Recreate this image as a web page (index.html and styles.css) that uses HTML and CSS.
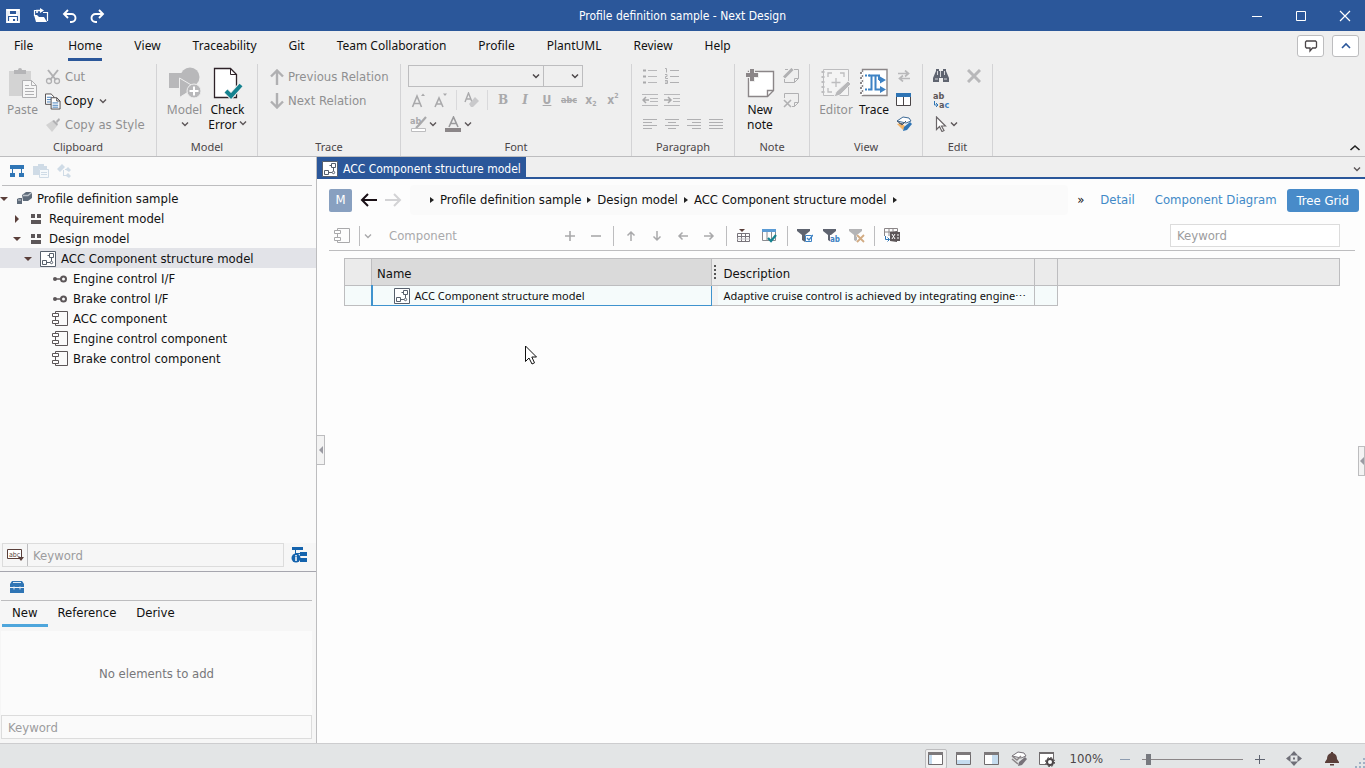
FILE: index.html
```
<!DOCTYPE html>
<html lang="en">
<head>
<meta charset="utf-8">
<title>Profile definition sample - Next Design</title>
<link rel="stylesheet" href="styles.css">
</head>
<body>
<svg class="sprite" aria-hidden="true">
  <symbol id="chev" viewBox="0 0 8 8"><path d="M1 2.500l3 3 3-3" fill="none" stroke="currentColor" stroke-width="1.400"/></symbol>
  <symbol id="down" viewBox="0 0 8 8"><path d="M0 2h8L4 6z" fill="#5a3f3a"/></symbol>
  <symbol id="right" viewBox="0 0 8 8"><path d="M2 0v8l4-4z" fill="#5a3f3a"/></symbol>
  <symbol id="struct" viewBox="0 0 16 16"><path d="M.5.5h15v15H.5z" fill="#fff" stroke="#57606c"/><path d="M9.500 2.500h4v4h-4zM2.500 9.500h4v4h-4zM7 11.500h3M11.500 7v3M9 4.500H7.500" fill="none" stroke="#57606c"/><circle cx="11.500" cy="11.500" r="1.200" fill="#fff" stroke="#57606c"/></symbol>
  <symbol id="comp" viewBox="0 0 16 16"><path d="M3.500 3V.5h12v14h-12V12M3.500 6v3" fill="none" stroke="currentColor"/><path d="M.5 2.500h6v3h-6zM.5 9.500h6v3h-6z" fill="#fff" stroke="currentColor"/></symbol>
  <symbol id="iface" viewBox="0 0 16 10"><circle cx="3" cy="5" r="2" fill="#5c5658"/><path d="M4 5h5" stroke="#5c5658" stroke-width="1.500"/><circle cx="11.500" cy="5" r="2.500" fill="none" stroke="#5c5658" stroke-width="2"/></symbol>
  <symbol id="pkg" viewBox="0 0 12 12"><path d="M1 1h4v4H1zM7 1h4v4H7zM1 7h10v4H1z" fill="#5c5658"/></symbol>
  <symbol id="arr" viewBox="0 0 12 12"><path d="M6 11V2M2.500 5.500L6 2l3.500 3.500" fill="none" stroke="currentColor" stroke-width="1.500"/></symbol>
</svg>
<div class="app">
  <header class="titlebar">
    <div class="quick">
      <button aria-label="Save"><svg width="14" height="14" viewBox="0 0 14 14"><path d="M1 1h12v12H1zM3 1v5h8V1M4 13V9h6v4" fill="none" stroke="#fff" stroke-width="1.800"/><path d="M4 9h3v4H4z" fill="#fff"/></svg></button>
      <button aria-label="Open"><svg width="16" height="15" viewBox="0 0 16 15"><path d="M14.500 13V4.500H10M1.500 8V2.500H4" fill="none" stroke="#fff" stroke-width="1.200"/><path d="M1 7h3l2 2h5l3 5H3zM7 0l4 2.500L7 5z" fill="#fff"/><path d="M4 5V2.500h4" fill="none" stroke="#fff" stroke-width="1.600"/></svg></button>
      <button aria-label="Undo"><svg width="15" height="14" viewBox="0 0 15 14"><path d="M6 1L2 5l4 4M2 5h7.500a4 4 0 0 1 0 8H8" fill="none" stroke="#fff" stroke-width="1.900"/></svg></button>
      <button aria-label="Redo"><svg width="15" height="14" viewBox="0 0 15 14"><path d="M9 1l4 4-4 4M13 5H5.500a4 4 0 0 0 0 8H7" fill="none" stroke="#fff" stroke-width="1.900"/></svg></button>
    </div>
    <h1>Profile definition sample - Next Design</h1>
    <div class="win">
      <button aria-label="Minimize"><svg width="12" height="12"><path d="M1 6.500h10" stroke="#fff"/></svg></button>
      <button aria-label="Maximize"><svg width="12" height="12"><path d="M1.500 1.500h9v9h-9z" fill="none" stroke="#fff"/></svg></button>
      <button aria-label="Close"><svg width="12" height="12"><path d="M1 1l10 10M11 1L1 11" stroke="#fff" stroke-width="1.200"/></svg></button>
    </div>
  </header>

  <nav class="menu">
    <button>File</button><button class="on">Home</button><button>View</button><button>Traceability</button><button>Git</button><button>Team Collaboration</button><button>Profile</button><button>PlantUML</button><button>Review</button><button>Help</button>
    <div class="menu-right">
      <button class="boxed" aria-label="Feedback"><svg width="14" height="13" viewBox="0 0 14 13"><path d="M2.500 1h9l1 1v5l-1 1H8.500L6 11V8H2.500l-1-1V2z" fill="none" stroke="#4b4648" stroke-width="1.300"/></svg></button>
      <button class="boxed" aria-label="Collapse"><svg width="12" height="8" viewBox="0 0 12 8"><path d="M2 6l4-4 4 4" fill="none" stroke="#2b579a" stroke-width="1.600"/></svg></button>
    </div>
  </nav>

  <section class="ribbon">
    <div class="group clipboard">
      <div class="tools">
        <button class="big dim"><svg width="30" height="32" viewBox="0 0 30 32"><path d="M1 4h22v25H1z" fill="#d3d3d3"/><path d="M6 3h4a2 2 0 0 1 4 0h4v4H6z" fill="#b5b5b7"/><path d="M14.500 13.500h9l5 5v12h-14z" fill="#f6f6f6" stroke="#b0b0b2"/><path d="M23.500 13.500v5h5M17 18.500h4M17 21.500h9M17 24.500h9M17 27.500h9" fill="none" stroke="#b0b0b2"/></svg><span>Paste</span></button>
        <div class="stack">
          <button class="row dim"><svg width="16" height="16" viewBox="0 0 16 16"><path d="M3 1l8 10M13 1L5 11" stroke="#b0b0b2" stroke-width="2"/><circle cx="4" cy="12" r="2.500" fill="none" stroke="#b0b0b2" stroke-width="1.300"/><circle cx="12" cy="12" r="2.500" fill="none" stroke="#b0b0b2" stroke-width="1.300"/></svg>Cut</button>
          <button class="row copy"><svg width="16" height="17" viewBox="0 0 17 17"><path d="M.5.5h6l3 3v8h-9z" fill="#fff" stroke="#4b4648"/><path d="M2 4h5M2 6.500h5M2 9h4" stroke="#3d7ab8"/><path d="M6.500 4.500h6l3.500 3.500v8.500H6.500z" fill="#fff" stroke="#4b4648"/><path d="M12.500 4.500v3.500H16" fill="none" stroke="#4b4648"/><path d="M8 10h6M8 12.500h6M8 14.500h6" stroke="#3d7ab8"/></svg>Copy<svg class="c8"><use href="#chev"/></svg></button>
          <button class="row dim"><svg width="16" height="16" viewBox="0 0 16 16"><path d="M1 8l6-4 5 5-5 6z" fill="#d3d3d3"/><path d="M7 4l2-1 4 4-1 2zM11 4l3-3 1 2-3 3z" fill="#b0b0b2"/></svg>Copy as Style</button>
        </div>
      </div>
      <div class="cap">Clipboard</div>
    </div>
    <div class="group model">
      <div class="tools">
        <button class="big dim"><svg width="32" height="32" viewBox="0 0 32 32"><circle cx="21" cy="10" r="9.500" fill="#b8b8ba"/><path d="M0 6h16v15H0z" fill="#b8b8ba"/><path d="M10.500 11l16 9.500-16 10z" fill="#b8b8ba" stroke="#efefef"/><circle cx="25" cy="24" r="7" fill="#b8b8ba" stroke="#efefef"/><path d="M20.500 24h9M25 19.500v9" stroke="#fff" stroke-width="2"/></svg><span>Model</span><svg class="c8"><use href="#chev"/></svg></button>
        <button class="big"><svg width="30" height="32" viewBox="0 0 30 32"><path d="M1.500 1.500h16l6 6v23h-22z" fill="#fff" stroke="#2e2228" stroke-width="1.300"/><path d="M17.500 1.500v6h6" fill="none" stroke="#2e2228"/><path d="M13 24l5 5 10-11" fill="none" stroke="#efefef" stroke-width="6"/><path d="M13 24l5 5 10-11" fill="none" stroke="#15828f" stroke-width="4"/></svg><span>Check</span><span>Error<svg class="c8"><use href="#chev"/></svg></span></button>
      </div>
      <div class="cap">Model</div>
    </div>
    <div class="group trace">
      <div class="tools stack">
        <button class="row dim"><svg width="14" height="16" viewBox="0 0 14 16"><path d="M7 16V2M1 7.500L7 1.500l6 6" fill="none" stroke="#b0b0b2" stroke-width="2.400"/></svg>Previous Relation</button>
        <button class="row dim"><svg width="14" height="16" viewBox="0 0 14 16"><path d="M7 0v14M1 8.500l6 6 6-6" fill="none" stroke="#b0b0b2" stroke-width="2.400"/></svg>Next Relation</button>
      </div>
      <div class="cap">Trace</div>
    </div>
    <div class="group font">
      <div class="tools stack">
        <div class="line"><select class="family" aria-label="Font family"><option></option></select><select class="size" aria-label="Font size"><option></option></select></div>
        <div class="line">
          <button class="ic" aria-label="Grow font"><svg width="16" height="16" viewBox="0 0 16 16"><path d="M1.500 15L6 4l4.500 11M3 11.500h6" fill="none" stroke="#a9a9ab" stroke-width="1.600"/><path d="M10 4l2-2.500L14 4z" fill="#a9a9ab"/></svg></button>
          <button class="ic" aria-label="Shrink font"><svg width="16" height="16" viewBox="0 0 16 16"><path d="M2 15l4-9 4 9M3.500 12h5" fill="none" stroke="#a9a9ab" stroke-width="1.600"/><path d="M10 1.500h4L12 4z" fill="#a9a9ab"/></svg></button>
          <i class="vs"></i>
          <button class="ic" aria-label="Clear format"><svg width="16" height="16" viewBox="0 0 16 16"><path d="M1 10L4.500 1 8 10M2 7h5" fill="none" stroke="#a9a9ab" stroke-width="1.400"/><path d="M5 12l6-7 4 4-6 6H7z" fill="#c9c9cb"/></svg></button>
          <i class="vs"></i>
          <button class="ic g b">B</button><button class="ic g i">I</button><button class="ic g u">U</button><button class="ic g s">abc</button><button class="ic g x">x<sub>2</sub></button><button class="ic g x">x<sup>2</sup></button>
        </div>
        <div class="line">
          <button class="ic wide" aria-label="Highlight"><svg width="17" height="16" viewBox="0 0 17 16"><text x="0" y="8" class="t9" fill="#a9a9ab">ab</text><path d="M16 1L9 9l-3 3" stroke="#a9a9ab" stroke-width="2.200"/><path d="M1.500 12.500h14v3h-14z" fill="#fff" stroke="#bdbdbf"/></svg><svg class="c8"><use href="#chev"/></svg></button>
          <button class="ic wide" aria-label="Font colour"><svg width="17" height="16" viewBox="0 0 17 16"><path d="M4 11L8.500 1 13 11M5.500 7.500h6" fill="none" stroke="#9a9a9c" stroke-width="1.600"/><path d="M0 12h16v4H0z" fill="#8b8688"/></svg><svg class="c8"><use href="#chev"/></svg></button>
        </div>
      </div>
      <div class="cap">Font</div>
    </div>
    <div class="group para">
      <div class="tools grid4">
        <button class="ic" aria-label="Bullets"><svg width="16" height="16"><path d="M6 2.500h9M6 8.500h9M6 14.500h9" stroke="#b8b8ba"/><path d="M1 2.500h3M1 8.500h3M1 14.500h3" stroke="#a9a9ab" stroke-width="2"/></svg></button>
        <button class="ic" aria-label="Numbering"><svg width="16" height="16"><path d="M6 2.500h9M6 8.500h9M6 14.500h9M1 .5h1.500v4M1 6.500h2v2H1.500v2H4M1 12.500h2.500v3H1M1 14h2" fill="none" stroke="#b0b0b2"/></svg></button><i></i><i></i>
        <button class="ic" aria-label="Outdent"><svg width="16" height="14"><path d="M0 1.500h16M8 5.500h8M8 8.500h8M0 12.500h16" stroke="#b8b8ba"/><path d="M1 7h6M4 4L1 7l3 3" fill="none" stroke="#a9a9ab" stroke-width="1.500"/></svg></button>
        <button class="ic" aria-label="Indent"><svg width="16" height="14"><path d="M0 1.500h16M9 5.500h7M9 8.500h7M0 12.500h16" stroke="#b8b8ba"/><path d="M0 7h6M4 4l3 3-3 3" fill="none" stroke="#a9a9ab" stroke-width="1.500"/></svg></button><i></i><i></i>
        <button class="ic" aria-label="Left"><svg width="16" height="12"><path d="M1 1.500h14M1 4.500h9M1 7.500h14M1 10.500h9" stroke="#b0b0b2"/></svg></button>
        <button class="ic" aria-label="Centre"><svg width="16" height="12"><path d="M1 1.500h14M4 4.500h8M1 7.500h14M4 10.500h8" stroke="#b0b0b2"/></svg></button>
        <button class="ic" aria-label="Right"><svg width="16" height="12"><path d="M1 1.500h14M6 4.500h9M1 7.500h14M6 10.500h9" stroke="#b0b0b2"/></svg></button>
        <button class="ic" aria-label="Justify"><svg width="16" height="12"><path d="M1 1.500h14M1 4.500h14M1 7.500h14M1 10.500h14" stroke="#b0b0b2"/></svg></button>
      </div>
      <div class="cap">Paragraph</div>
    </div>
    <div class="group note">
      <div class="tools">
        <button class="big"><svg width="30" height="32" viewBox="0 0 30 32"><path d="M3.500 4.500h25v19l-6 6h-19z" fill="#fff" stroke="#8b8688" stroke-width="1.400"/><path d="M22.500 29.500v-6h6" fill="none" stroke="#8b8688" stroke-width="1.400"/><path d="M1 8h13M7 2v13" stroke="#efefef" stroke-width="6"/><path d="M1 8h12M7 2v12" stroke="#8b8688" stroke-width="4"/></svg><span>New</span><span>note</span></button>
        <div class="stack">
          <button class="ic" aria-label="Edit note"><svg width="16" height="16"><path d="M2 1.500h3M11 1.500h4.500v9l-4 4H1.500V11M11.500 14.500v-4h4" fill="none" stroke="#b0b0b2"/><path d="M1 9.500L9.500 1" stroke="#b0b0b2" stroke-width="3"/></svg></button>
          <button class="ic" aria-label="Delete note"><svg width="16" height="16"><path d="M1.500 6V1.500h14v9l-4 4H9M11.500 14.500v-4h4" fill="none" stroke="#b0b0b2"/><path d="M1 8l7 7M8 8l-7 7" stroke="#b0b0b2" stroke-width="1.600"/></svg></button>
        </div>
      </div>
      <div class="cap">Note</div>
    </div>
    <div class="group view">
      <div class="tools">
        <button class="big dim"><svg width="30" height="32" viewBox="0 0 30 32"><path d="M2.500 2.500h25v26h-25z" fill="#f4f4f4" stroke="#bdbdbf"/><path d="M7 10V6h4M19 6h4v4M7 21v4h4M15 11v9M10.500 15.500h9" fill="none" stroke="#bdbdbf" stroke-width="1.300"/><path d="M2 4v24" stroke="#bdbdbf" stroke-width="3" stroke-dasharray="2 3"/><path d="M13 30l2-5L27 14l3 3-11 11z" fill="#b8b8ba" stroke="#efefef"/></svg><span>Editor</span></button>
        <button class="big"><svg width="28" height="32" viewBox="0 0 28 32"><path d="M2.500 2.500h24.500v26h-24.500z" fill="#fff" stroke="#8b8688" stroke-width="1.400"/><path d="M2 5v23" stroke="#fff" stroke-width="3" stroke-dasharray="3 2"/><path d="M1 5v23" stroke="#8b8688" stroke-width="2" stroke-dasharray="2 3"/><path d="M5 8.500h5M5 22.500h5" stroke="#3d82c4" stroke-width="2" stroke-dasharray="2 1"/><path d="M10 22.500h1.500v-14H19V13M9 8.500h3M15.500 9v13.500H21M19 13h2" fill="none" stroke="#3d82c4" stroke-width="2"/><path d="M20 9.500l6 3.500-6 3.500zM20 19l6 3.500-6 3.500z" fill="#3d82c4"/></svg><span>Trace</span></button>
        <div class="stack">
          <button class="ic" aria-label="Swap"><svg width="14" height="12" viewBox="0 0 14 12"><path d="M1 3.500h10M8 .5l3.500 3L8 6.500M13 8.500H3M6 5.500l-3.500 3 3.500 3" fill="none" stroke="#b8b8ba" stroke-width="1.700"/></svg></button>
          <button class="ic" aria-label="Split view"><svg width="16" height="14"><path d="M.5.5h14v12H.5zM7.500 3v10" fill="#fff" stroke="#4b4648"/><path d="M0 0h15v4H0z" fill="#2f75b5"/></svg></button>
          <button class="ic" aria-label="Style"><svg width="17" height="16" viewBox="0 0 17 16"><path d="M1 5l6-4 6 1 2 3-5 2z" fill="#fff" stroke="#3d6a96"/><path d="M1 8l6 6 2-4-4-3z" fill="#f2b366"/><path d="M1 5l5 4 4-4M3 7l4 1" fill="none" stroke="#4b5a6c"/><path d="M7 15l1-4 6-5 2 2-5 6z" fill="#2f75b5"/></svg></button>
        </div>
      </div>
      <div class="cap">View</div>
    </div>
    <div class="group edit">
      <div class="tools edit-grid">
        <button class="ic" aria-label="Find"><svg width="16" height="14"><path d="M3 0h3v2h4V0h3v2l3 7v4h-6V9H6v4H0V9l3-7z" fill="#5f6470"/><path d="M7.500 2v6M2 10h3M11 10h3M4.500 2v4M11.500 2v4" stroke="#d5d6da"/></svg></button>
        <button class="ic" aria-label="Delete"><svg width="14" height="14"><path d="M1 1l12 12M13 1L1 13" stroke="#b8b8ba" stroke-width="3"/></svg></button>
        <button class="ic" aria-label="Replace"><svg width="17" height="18"><text x="0" y="8" class="t9" fill="#5c5658">ab</text><text x="6" y="17" class="t9" fill="#5c5658">a<tspan fill="#3d82c4">c</tspan></text><path d="M1.500 10v4h3M3 12l2 2-2 2" fill="none" stroke="#2f75b5"/></svg></button><i></i>
        <button class="ic wide" aria-label="Select"><svg width="12" height="16" viewBox="0 0 12 16"><path d="M1.500 1v12.500l3-3 2.500 5 2-1-2.500-4.500h4z" fill="#fff" stroke="#6b6668" stroke-width="1.200"/></svg><svg class="c8"><use href="#chev"/></svg></button>
      </div>
      <div class="cap">Edit</div>
    </div>
    <button class="fold" aria-label="Collapse ribbon"><svg width="12" height="8" viewBox="0 0 12 8"><path d="M1.500 6L6 2l4.500 4" fill="none" stroke="#222" stroke-width="1.600"/></svg></button>
  </section>

  <main class="work">
    <aside class="side">
      <div class="side-tools">
        <button aria-label="Model tree"><svg width="16" height="14"><path d="M1 1h14v4H1zM1 9h5v4H1zM10 9h5v4h-5zM3 5h1v4H3zM12 5h1v4h-1z" fill="#2f75b5"/></svg></button>
        <button aria-label="Pages"><svg width="16" height="14"><path d="M0 2h5V0h6v2h3v3H6v6H0z" fill="#cfdbe6"/><path d="M6.500 5.500h9v8h-9zM8 8.500h6M8 10.500h6" fill="#f6f9fb" stroke="#cfdbe6"/></svg></button>
        <button aria-label="Relations"><svg width="15" height="14"><path d="M0 5l5-5 3 3-5 5zM8 5h1l2-2 3 3-2 2-3-2H8zM7 11h2l2-2 3 3-2 2-3-2H6V6h1z" fill="#cfdbe6"/></svg></button>
      </div>
      <ul class="tree">
        <li class="l0"><svg class="c8"><use href="#down"/></svg><svg width="15" height="13" viewBox="0 0 15 13"><path d="M5 3l4-3h5l1 2v4l-4 3H6z" fill="#5f6b7a"/><path d="M6 3.500h5l3-2.500" fill="none" stroke="#b9c0c8" stroke-width="1.500"/><path d="M0 7l2-1h3v6H0z" fill="#5f6b7a"/><path d="M1 8h3" stroke="#cfd4da"/></svg>Profile definition sample</li>
        <li class="l1"><svg class="c8"><use href="#right"/></svg><svg class="s12"><use href="#pkg"/></svg>Requirement model</li>
        <li class="l1"><svg class="c8"><use href="#down"/></svg><svg class="s12"><use href="#pkg"/></svg>Design model</li>
        <li class="l2 sel"><svg class="c8"><use href="#down"/></svg><svg class="s16"><use href="#struct"/></svg>ACC Component structure model</li>
        <li class="l3"><svg class="s16"><use href="#iface"/></svg>Engine control I/F</li>
        <li class="l3"><svg class="s16"><use href="#iface"/></svg>Brake control I/F</li>
        <li class="l3"><svg class="s16"><use href="#comp"/></svg>ACC component</li>
        <li class="l3"><svg class="s16"><use href="#comp"/></svg>Engine control component</li>
        <li class="l3"><svg class="s16"><use href="#comp"/></svg>Brake control component</li>
      </ul>
      <div class="find">
        <div class="find-box">
          <button aria-label="Match mode"><svg width="17" height="12"><path d="M.5.5h14v9H.5z" fill="#fff" stroke="#5a3f3a"/><text x="2" y="8" class="t7" fill="#5a3f3a">abc</text><path d="M11 8h6l-3 4z" fill="#5a3f3a"/></svg></button>
          <input type="text" placeholder="Keyword" aria-label="Search tree">
        </div>
        <button aria-label="Tree options"><svg width="17" height="16"><path d="M1 0h11v3H1zM9 5h7v4H9zM9 11h7v4H9zM4 3h1v4H4zM5 6h4v1H5z" fill="#1463ad"/><circle cx="5" cy="11" r="4.500" fill="#1463ad"/><path d="M5 8v1.500M5 10v4" stroke="#fff" stroke-width="1.500"/></svg></button>
      </div>
      <div class="palette">
        <div class="palette-head"><svg width="14" height="13"><path d="M0 4l2-3h10l2 3v3H0zM0 8h14v5H0z" fill="#2f75b5"/><path d="M3 2.500h8M4 6.500v3M10 6.500v3" stroke="#dcebf7"/></svg></div>
        <nav class="ptabs"><button class="on">New</button><button>Reference</button><button>Derive</button></nav>
        <div class="empty">No elements to add</div>
        <input type="text" placeholder="Keyword" aria-label="Search palette">
      </div>
      <button class="grip" aria-label="Collapse panel"><svg width="4" height="8"><path d="M4 0v8L0 4z" fill="#9b9ba3"/></svg></button>
    </aside>

    <section class="doc">
      <div class="tabs">
        <button class="tab"><svg class="s16"><use href="#struct"/></svg>ACC Component structure model</button>
        <button class="more" aria-label="All tabs"><svg class="c8"><use href="#chev"/></svg></button>
      </div>
      <div class="crumbs">
        <button class="m">M</button>
        <button aria-label="Back"><svg width="17" height="14"><path d="M17 7H2M8 1L2 7l6 6" fill="none" stroke="#1a1016" stroke-width="2"/></svg></button>
        <button aria-label="Forward"><svg width="17" height="14"><path d="M0 7h15M9 1l6 6-6 6" fill="none" stroke="#d3d3d5" stroke-width="2"/></svg></button>
        <div class="path"><i></i><span>Profile definition sample</span><i></i><span>Design model</span><i></i><span>ACC Component structure model</span><i></i></div>
        <span class="raquo">»</span>
        <a href="#">Detail</a><a href="#">Component Diagram</a><a href="#" class="on">Tree Grid</a>
      </div>
      <div class="bar">
        <button class="ic" aria-label="Component type"><svg class="s16"><use href="#comp"/></svg></button><i class="vs dark"></i><svg class="c8"><use href="#chev"/></svg>
        <span class="kind">Component</span>
        <button class="t" aria-label="Add"><svg class="s12" viewBox="0 0 12 12"><path d="M6 1v10M1 6h10" stroke="currentColor" stroke-width="1.600"/></svg></button>
        <button class="t" aria-label="Remove"><svg class="s12" viewBox="0 0 12 12"><path d="M1 6h10" stroke="currentColor" stroke-width="1.600"/></svg></button>
        <i class="vs dark"></i>
        <button class="t" aria-label="Up"><svg class="s12"><use href="#arr"/></svg></button>
        <button class="t" aria-label="Down"><svg class="s12 r180"><use href="#arr"/></svg></button>
        <button class="t" aria-label="Left"><svg class="s12 r270"><use href="#arr"/></svg></button>
        <button class="t" aria-label="Right"><svg class="s12 r90"><use href="#arr"/></svg></button>
        <i class="vs dark"></i>
        <button class="t" aria-label="Insert column"><svg width="14" height="14"><path d="M.5 4.500h12v8H.5zM0 7.500h13M4.500 5v8M8.500 5v8" fill="none" stroke="#77737a"/><path d="M0 10h13" stroke="#c3c1c5"/><path d="M2 0h6L5 3z" fill="#5a3f3a"/></svg></button>
        <button class="t" aria-label="Choose columns"><svg width="16" height="14"><path d="M.5.5h13v11H.5zM5 3v8M9.500 3v8" fill="none" stroke="#8b8b90"/><path d="M0 0h14v3H0z" fill="#5b9bd5"/><path d="M6 9l3 3 5-6" fill="none" stroke="#15828f" stroke-width="2.200"/></svg></button>
        <i class="vs dark"></i>
        <button class="t" aria-label="Filter"><svg width="16" height="15"><path d="M0 1h13v2L8 7v7l-3-2V7L0 3z" fill="#5f6470"/><path d="M8.500 7.500h6v6h-6z" fill="#fff" stroke="#3d82c4"/><path d="M10 10l2 2 4-5" fill="none" stroke="#3d82c4" stroke-width="1.300"/></svg></button>
        <button class="t" aria-label="Text filter"><svg width="17" height="15"><path d="M0 1h13v2L8 7v7l-3-2V7L0 3z" fill="#5f6470"/><path d="M7 7h10v8H7z" fill="#fdfdfd"/><text x="7" y="14" class="t8" fill="#3d82c4">ab</text></svg></button>
        <button class="t" aria-label="Clear filter"><svg width="17" height="15"><path d="M0 1h13v2L8 7v7l-3-2V7L0 3z" fill="#b4b4b6"/><path d="M8 7l7 7M15 7l-7 7" stroke="#fdfdfd" stroke-width="3"/><path d="M8 7l7 7M15 7l-7 7" stroke="#d2ab83" stroke-width="1.800"/></svg></button>
        <i class="vs dark"></i>
        <button class="t" aria-label="Export"><svg width="17" height="15"><path d="M.5 8V.5h13V4M1 4h7M5 1v7M9 1v3" fill="none" stroke="#8b8688"/><path d="M6 4l7-1v11l-7-1zM13 4h3v9h-3z" fill="#5c5658"/><path d="M8 6l3 5M11 6l-3 5M13 7h2M13 10h2" stroke="#fff"/><path d="M1.500 8v3.500h4M3.500 9.500l2 2-2 2" fill="none" stroke="#2f75b5"/></svg></button>
        <input type="text" placeholder="Keyword" aria-label="Search grid">
      </div>
      <div class="sheet">
        <table>
          <colgroup><col class="k0"><col class="k1"><col class="k2"><col class="k3"><col class="k4"><col></colgroup>
          <thead><tr><th></th><th class="name">Name</th><th class="gap"><svg width="2" height="14"><path d="M1 0v14" stroke="#555" stroke-width="2" stroke-dasharray="2 2"/></svg></th><th>Description</th><th></th><th></th></tr></thead>
          <tbody><tr><td></td><td class="cur"><span><svg class="s16"><use href="#struct"/></svg>ACC Component structure model</span></td><td class="gap"></td><td class="desc">Adaptive cruise control is achieved by integrating engine⋯</td><td></td><td class="none"></td></tr></tbody>
        </table>
      </div>
      <button class="grip right" aria-label="Expand panel"><svg width="4" height="8"><path d="M4 0v8L0 4z" fill="#9b9ba3"/></svg></button>
    </section>
  </main>

  <footer class="status">
    <button class="on" aria-label="Left layout"><svg width="16" height="14"><path d="M.5.5h14v12H.5z" fill="#fff" stroke="#6f6b6d"/><path d="M0 0h15v3H0z" fill="#7d797b"/><path d="M1 3h3v9H1z" fill="#c5dcef"/></svg></button>
    <button aria-label="Bottom layout"><svg width="16" height="14"><path d="M.5.5h14v12H.5z" fill="#fff" stroke="#6f6b6d"/><path d="M0 0h15v3H0z" fill="#7d797b"/><path d="M1 8h13v4H1z" fill="#c5dcef"/></svg></button>
    <button aria-label="Right layout"><svg width="16" height="14"><path d="M.5.5h14v12H.5z" fill="#fff" stroke="#6f6b6d"/><path d="M0 0h15v3H0z" fill="#7d797b"/><path d="M8 3h6v9H8z" fill="#c5dcef"/></svg></button>
    <button aria-label="Style"><svg width="17" height="16" viewBox="0 0 17 16"><path d="M1 5l6-4 6 1 2 3-5 2z" fill="#fff" stroke="#77737a"/><path d="M1 5l5 4 4-4M1 8l6 5" fill="none" stroke="#8b8688" stroke-width="1.500"/><path d="M7 15l1-4 6-5 2 2-5 6z" fill="#77737a"/></svg></button>
    <button aria-label="Window settings"><svg width="17" height="16" viewBox="0 0 17 16"><path d="M7 13.500H.5v-12h14V8" fill="#fff" stroke="#6f6b6d"/><path d="M0 1h15v2H0z" fill="#6f6b6d"/><circle cx="11" cy="11" r="3" fill="#fff" stroke="#4b4648" stroke-width="2"/><circle cx="11" cy="11" r="4.500" fill="none" stroke="#4b4648" stroke-dasharray="2 1.500"/></svg></button>
    <span class="pct">100%</span>
    <button class="z" aria-label="Zoom out"><svg width="10" height="10"><path d="M0 5.500h10" stroke="#8d9cb0"/></svg></button>
    <input type="range" min="0" max="100" value="4" aria-label="Zoom">
    <button class="z" aria-label="Zoom in"><svg width="10" height="10"><path d="M0 5.500h10M4.500 1v9" stroke="#5f6470"/></svg></button>
    <button class="fit" aria-label="Fit"><svg width="16" height="16"><path d="M8 0l4 4.500H4zM8 15l4-4.500H4zM0 7.500L4.500 4v7zM16 7.500L11.500 4v7z" fill="#6f6f78"/><path d="M7 6.500h2v2H7z" fill="#6f6f78"/></svg></button>
    <button class="bell" aria-label="Notifications"><svg width="14" height="14"><path d="M6 0h2v1c3 1 4 3 4 6l2 3v1H0v-1l2-3c0-3 1-5 4-6zM5 12h4v1.500H5z" fill="#5a3f3a"/></svg></button>
    <svg class="size-grip" width="10" height="10"><path d="M8 0h2v2H8zM8 4h2v2H8zM8 8h2v2H8zM4 4h2v2H4zM4 8h2v2H4zM0 8h2v2H0z" fill="#9fb0c4"/></svg>
  </footer>
  <svg class="cursor" width="12" height="20" viewBox="0 0 12 20"><path d="M.5 1v15.500l3.500-3.500 3 6 2.500-1.200L6.800 12h4.700z" fill="#fff" stroke="#111"/></svg>
</div>
</body>
</html>
```
FILE: styles.css
```
* { box-sizing: border-box; }
html, body { height: 100%; }
body { margin: 0; font: 13px/20px "DejaVu Sans Condensed", "DejaVu Sans", sans-serif; color: #111; }
button, input, select { font: inherit; color: inherit; margin: 0; }
button { background: none; border: 0; padding: 0; display: flex; align-items: center; justify-content: center; }
svg { display: block; flex: none; }
input::placeholder { color: #9c9c9e; opacity: 1; }
.sprite { display: none; }
.c8 { width: 8px; height: 8px; color: #5c5658; }
.s12 { width: 12px; height: 12px; }
.s16 { width: 16px; height: 16px; }
.r90 { transform: rotate(90deg); }
.r180 { transform: rotate(180deg); }
.r270 { transform: rotate(270deg); }
.t7 { font: 7px "DejaVu Sans Condensed", sans-serif; }
.t8 { font: bold 8px "DejaVu Sans Condensed", sans-serif; }
.t9 { font: bold 9px "DejaVu Sans Condensed", sans-serif; }

.app { position: relative; display: flex; flex-direction: column; min-height: 100vh; background: #fdfdfd; }

.titlebar { display: grid; grid-template-columns: 1fr auto 1fr; align-items: center; height: 31px; background: #2b579a; color: #fff; }
.titlebar h1 { margin: 0; font-size: 12px; font-weight: normal; line-height: 20px; }
.quick { display: flex; gap: 12px; padding-left: 5px; }
.quick button { width: 16px; }
.win { display: flex; justify-content: flex-end; }
.win button { width: 44px; height: 31px; padding-left: 4px; }

.menu { display: flex; height: 33px; background: #efefef; font: 12px/20px "Noto Sans", sans-serif; padding: 0 6px 0 0; }
.menu > button { height: 30px; margin: 0 16px; padding-top: 2px; border-bottom: 3px solid transparent; }
.menu > button:first-child { margin: 0 19px 0 14px; }
.menu > button.on { border-color: #2b579a; }
.menu-right { display: flex; gap: 8px; margin-left: auto; padding-top: 4px; }
.boxed { width: 27px; height: 22px; background: #fff; border: 1px solid #bdbdbf; border-radius: 3px; }

.ribbon { display: flex; background: #efefef; border-bottom: 1px solid #bdbdbf; height: 93px; }
.group { display: flex; flex-direction: column; border-right: 1px solid #d3d3d5; }
.tools { display: flex; height: 75px; }
.cap { text-align: center; font: 11px/18px "Noto Sans", sans-serif; color: #4b4648; }
.stack { display: flex; flex-direction: column; }
.row { height: 24px; gap: 4px; padding-top: 2px; justify-content: flex-start; }
.row .c8 { margin-left: 2px; }
.row.copy { gap: 3px; }
.dim { color: #8f8f91; }
.big { flex-direction: column; justify-content: flex-start; padding-top: 3px; font: 12px/15px "Noto Sans", sans-serif; }
.big svg:first-child { margin-bottom: 3px; }
.big span { display: flex; align-items: center; gap: 2px; }
.big > .c8 { margin-top: 3px; }
.ic { width: 22px; height: 24px; }
.wide { width: 35px; gap: 3px; justify-content: flex-start; }
.line { display: flex; align-items: center; height: 24px; }
.line .wide { padding-left: 2px; gap: 2px; }
.vs { width: 1px; height: 20px; margin: 0 4px; background: #d9d9db; }
.clipboard { width: 157px; }
.clipboard .tools { padding-left: 7px; }
.clipboard .big { width: 31px; margin-right: 7px; }
.model { width: 101px; }
.model .tools { padding-left: 6px; }
.model .big { width: 43px; }
.trace { width: 143px; }
.trace .tools { padding-left: 12px; }
.font { width: 231px; }
.font .tools { padding-left: 7px; }
.font select { height: 22px; border: 1px solid #bdbdbf; background: #efefef url("data:image/svg+xml,%3Csvg xmlns='http://www.w3.org/2000/svg' width='8' height='8'%3E%3Cpath d='M1 2.500l3 3 3-3' fill='none' stroke='%234b4648' stroke-width='1.500'/%3E%3C/svg%3E") no-repeat right 3px center; appearance: none; border-radius: 0; }
.font .family { width: 136px; }
.font .size { width: 39px; border-left: 0; }
.g { color: #a9a9ab; font: bold 12px/20px "DejaVu Sans Condensed", sans-serif; }
.b { font-family: "DejaVu Serif", serif; }
.i { font-family: "DejaVu Serif", serif; font-style: italic; }
.u { text-decoration: underline; }
.s { font-size: 9px; text-decoration: line-through; }
.x sub, .x sup { font-size: 7px; line-height: 8px; vertical-align: baseline; }
.x sub { padding-top: 8px; }
.x sup { padding-bottom: 8px; }
.para { width: 103px; }
.grid4 { display: grid; grid-template-columns: repeat(4, 22px); grid-template-rows: repeat(3, 24px); padding-left: 7px; }
.note { width: 75px; }
.note .tools { padding-left: 9px; }
.note .big { width: 32px; margin-right: 4px; }
.view { width: 113px; }
.view .tools { padding-left: 7px; }
.view .big { width: 38px; }
.edit { width: 70px; }
.edit-grid { display: grid; grid-template-columns: 33px 22px; grid-template-rows: repeat(3, 24px); padding-left: 7px; }
.edit-grid .wide { width: 30px; padding-left: 5px; }
.fold { margin: auto 4px 4px auto; }

.work { display: flex; flex: 1; }
.side { position: relative; width: 317px; display: flex; flex-direction: column; background: #fafafa; border-right: 1px solid #bdbdbf; }
.side-tools { display: flex; gap: 8px; height: 29px; margin: 0 4px 0 2px; padding-left: 7px; border-bottom: 1px solid #bdbdbf; }
.tree { flex: 1; list-style: none; margin: 2px 0 0; padding: 0; }
.tree li { display: flex; align-items: center; gap: 5px; height: 20px; padding-top: 1px; }
.tree .l0 { gap: 5px; }
.tree .l0 .c8 { margin-right: 4px; }
.tree .l1 { padding-left: 13px; gap: 7px; }
.tree .l1 .c8 { margin-right: 2px; }
.tree .l2 { padding-left: 24px; }
.tree .l2 .c8 { margin-right: 3px; }
.tree .l3 { padding-left: 52px; }
.tree .s16 { color: #5c5658; }
.tree .sel { background: #e2e3e8; }
.find { display: flex; align-items: center; gap: 7px; padding: 0 8px 4px 2px; background: #f6f6f6; border-bottom: 1px solid #a6a6ae; }
.find-box { display: flex; flex: 1; height: 24px; border: 1px solid #dcdcdc; }
.find-box button { width: 25px; border-right: 1px solid #bdbdbf; }
.find-box input { flex: 1; min-width: 0; border: 0; background: none; padding: 1px 5px 0; }
.palette { display: flex; flex-direction: column; background: #f6f6f6; padding: 0 4px 4px 1px; }
.palette-head { height: 29px; display: flex; align-items: center; padding-left: 9px; border-bottom: 1px solid #bdbdbf; }
.ptabs { display: flex; height: 30px; gap: 0; padding-left: 1px; }
.ptabs button { height: 26px; padding: 0 10px; border-bottom: 3px solid transparent; }
.ptabs .on { border-color: #4ea6dc; }
.empty { height: 84px; padding-top: 2px; display: flex; align-items: center; justify-content: center; background: #fbfbfb; color: #77777a; }
.palette input { height: 24px; border: 1px solid #dcdcdc; background: #fafafa; padding: 0 6px; }
.grip { position: absolute; left: 316px; top: 278px; width: 9px; height: 30px; border: 1px solid #bdbdbf; background: #f3f3f3; }
.grip.right { left: auto; right: 0; top: 289px; width: 7px; }

.doc { position: relative; flex: 1; min-width: 0; }
.tabs { display: flex; justify-content: space-between; background: #efefef; border-bottom: 2px solid #2b579a; height: 22px; }
.tab { background: #2b579a; color: #fff; padding: 2px 5px 0 5px; gap: 5px; font-size: 12px; height: 22px; }
.more { padding: 3px 4px 0 0; }
.crumbs { display: flex; align-items: center; margin: 6px 6px 0 12px; height: 30px; }
.crumbs button { margin-right: 8px; }
.crumbs .m { width: 23px; height: 23px; border-radius: 2px; background: #88a0c0; color: #fff; }
.path { flex: 1; display: flex; align-items: center; height: 30px; margin: 0 9px 0 0; padding-left: 14px; border-radius: 4px; background: #fafafa; }
.path i { border: 3px solid transparent; border-left: 4px solid #222; border-right: 0; margin: 0 6px; }
.raquo { margin-right: 16px; }
.crumbs a { color: #4189c7; text-decoration: none; margin-right: 20px; white-space: nowrap; }
.crumbs .on { background: #488bc9; color: #fff; border-radius: 3px; height: 23px; line-height: 23px; padding: 0 10px; margin: 0 0 0 -10px; }
.crumbs a.on { margin-right: 0; }
.bar { display: flex; align-items: center; height: 36px; margin: 0 10px 0 12px; padding: 6px 15px 0 0; border-bottom: 1px solid #bdbdbf; color: #a9a9ab; }
.bar .ic { width: 26px; }
.bar > .c8 { color: #a9a9ab; }
.vs.dark { background: #bdbdbf; }
.kind { width: 168px; padding-left: 17px; margin-right: 17px; }
.t { width: 26px; height: 24px; flex: none; }
.bar .t + .vs { margin: 0 4px; }
.bar input { width: 170px; height: 23px; margin-left: auto; border: 1px solid #dcdcdc; background: #fff; padding: 0 6px; }
.sheet { padding: 7px 25px 0 27px; }
table { width: 100%; border-collapse: collapse; table-layout: fixed; }
.k0 { width: 27px; }
.k1 { width: 340px; }
.k2 { width: 6px; }
.k3 { width: 317px; }
.k4 { width: 23px; }
th { height: 27px; padding: 3px 5px 0; font-weight: normal; text-align: left; background: #ebebeb; border: 1px solid #bdbdbf; }
.name { background: #dadada; }
.gap { padding: 0; border-left: 0; border-right: 0; }
th.gap + th, td.gap + td { border-left: 0; padding-left: 6px; }
.gap svg { margin: 0 auto; }
td { height: 20px; padding: 0; background: #f5fbfb; border: 1px solid #bdbdbf; font: 11px/18px "Noto Sans", sans-serif; white-space: nowrap; overflow: hidden; }
td.gap { background: #f3f3f3; }
td.none { background: none; border: 0; }
td.cur { border: 1px solid #3f93ce; border-left-width: 2px; padding-left: 21px; }
.cur span { display: flex; align-items: center; gap: 5px; }

.status { display: flex; align-items: center; justify-content: flex-end; height: 25px; background: #e3e5e6; border-top: 1px solid #cdcdcf; padding-top: 6px; }
.status button { width: 28px; height: 20px; }
.status .on { width: 22px; margin-right: 3px; background: #efefef; border: 1px solid #bdbdbf; border-radius: 2px; }
.pct { margin: 0 16px 0 8px; color: #4b4648; }
.status .z { width: 12px; }
.status input { appearance: none; width: 101px; height: 14px; margin: 0 11px; background: linear-gradient(#8b8688, #8b8688) center / 100% 1px no-repeat; }
.status input::-webkit-slider-thumb { appearance: none; width: 5px; height: 11px; background: #77797f; }
.status .fit { margin-left: 14px; }
.status .bell { margin: 0 9px 0 10px; }
.size-grip { align-self: flex-end; }
.cursor { position: absolute; left: 525px; top: 345px; }
```
